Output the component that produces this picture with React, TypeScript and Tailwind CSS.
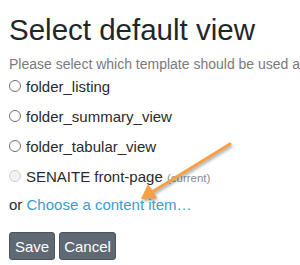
import React from "react";

const Radio = ({ disabled }: { disabled?: boolean }) => (
  <span
    className={
      "inline-block w-[12px] h-[12px] rounded-full border mt-[-2px] shrink-0 " +
      (disabled ? "border-[#cfcfcf] bg-[#f2f2f2]" : "border-[#6f6f6f] bg-white")
    }
  />
);

export default function App() {
  const items = ["folder_listing", "folder_summary_view", "folder_tabular_view"];
  return (
    <div
      className="relative w-[300px] h-[265px] overflow-hidden bg-white pl-[9px]"
      style={{ fontFamily: '"Liberation Sans", Arial, sans-serif' }}
    >
      <h1 className="mt-[12px] text-[29.5px] leading-[36px] text-[#232629] whitespace-nowrap">
        Select default view
      </h1>
      <p className="mt-[9px] text-[14px] leading-[15px] text-[#7a7a7a] whitespace-nowrap">
        Please select which template should be used as the default view
      </p>
      <div className="flex flex-col">
        {items.map((t) => (
          <div key={t} className="h-[30px] flex items-center gap-[5px] text-[15px] text-[#2a2a2a]">
            <Radio />
            <span>{t}</span>
          </div>
        ))}
        <div className="h-[30px] flex items-center gap-[5px] text-[15px] text-[#2a2a2a]">
          <Radio disabled />
          <span>
            SENAITE front-page{" "}
            <span className="text-[11.5px] text-[#8a8a8a]">(current)</span>
          </span>
        </div>
      </div>
      <div className="mt-[3px] text-[15px] leading-[20px] text-[#2a2a2a] whitespace-nowrap">
        or <span className="text-[#3d9bd2]">Choose a content item…</span>
      </div>
      <div className="mt-[17px] flex gap-[4px]">
        <button className="w-[46px] h-[28px] rounded-[3px] bg-[#5e6974] border border-[#4b555e] text-white text-[15px] leading-none">
          Save
        </button>
        <button className="w-[57px] h-[28px] rounded-[3px] bg-[#5e6974] border border-[#4b555e] text-white text-[15px] leading-none">
          Cancel
        </button>
      </div>
      <svg
        className="absolute left-0 top-0 pointer-events-none"
        width="300"
        height="265"
        viewBox="0 0 300 265"
        style={{ filter: "drop-shadow(1px 2px 1.5px rgba(0,0,0,0.35))" }}
      >
        <line x1="230" y1="144" x2="152" y2="192" stroke="#f7a043" strokeWidth="3" strokeLinecap="round" />
        <polygon points="141,199 148,184 157,198" fill="#f7a043" />
      </svg>
    </div>
  );
}
